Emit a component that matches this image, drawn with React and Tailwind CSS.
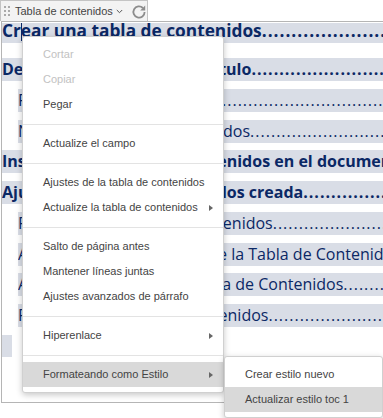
import React from "react";

const docFont = { fontFamily: '"Open Sans", "Noto Sans", sans-serif' };
const uiFont = { fontFamily: '"Liberation Sans", Arial, sans-serif' };

const DOTS = ".".repeat(120);

const TocLine = ({ children, bold, indent, first }) => (
  <div
    className={`flex bg-[#d9dde6] text-[#0b2865] whitespace-nowrap overflow-hidden ${indent ? "ml-[16px]" : ""} ${
      first ? "h-[20px] text-[17.3px] leading-[16px] font-bold" : "mt-[7.75px] h-[23px] text-[16px] leading-[23px]"
    } ${bold && !first ? "font-bold" : ""}`}
  >
    <span>{children}</span>
    <span className="flex-1 overflow-hidden tracking-[1px]">{DOTS}</span>
  </div>
);

const Arrow = () => (
  <svg width="4" height="6" viewBox="0 0 4 6" className="ml-auto">
    <path d="M0 0 L4 3 L0 6 Z" fill="#666" />
  </svg>
);

const Item = ({ children, disabled, active, sub }) => (
  <div
    className={`flex items-center h-[25px] pl-[20px] pr-[10px] ${disabled ? "text-[#c2c2c2]" : "text-[#444]"} ${
      active ? "bg-[#d9d9d9]" : ""
    }`}
  >
    <span>{children}</span>
    {sub && <Arrow />}
  </div>
);

const Divider = () => <div className="mt-[7px] mb-[6px] h-px bg-[#e3e3e3]" />;

const Refresh = () => (
  <svg width="16" height="16" viewBox="0 0 16 16">
    <path d="M13.6 8 A5.6 5.6 0 1 1 11.9 4" fill="none" stroke="#8c8c8c" strokeWidth="1.8" />
    <path d="M14.2 1.6 L14.2 6.6 L9.2 6.6 Z" fill="#8c8c8c" />
  </svg>
);

export default function App() {
  return (
    <div className="relative w-[383px] h-[418px] overflow-hidden bg-white" style={docFont}>
      {/* content control header */}
      <div
        className="flex items-center w-[148px] h-[21px] border border-b-0 border-[#c4c4c4] bg-[#f3f3f3] text-[11px] text-[#444]"
        style={uiFont}
      >
        <div className="grid grid-cols-2 gap-[2px] ml-[3px] mr-[5px]">
          {[0, 1, 2, 3, 4, 5].map(i => (
            <span key={i} className="w-[2px] h-[2px] bg-[#aaa]" />
          ))}
        </div>
        <span>Tabla de contenidos</span>
        <svg width="7" height="5" viewBox="0 0 7 5" className="ml-[3px] mt-[1px]">
          <path d="M0.8 1 L3.5 3.7 L6.2 1" fill="none" stroke="#555" strokeWidth="1" />
        </svg>
        <span className="ml-[8px] mt-[1px]">
          <Refresh />
        </span>
      </div>

      {/* document frame */}
      <div className="relative ml-px h-[382px] border-t border-l border-b border-[#b5b5b5] pt-px" style={docFont}>
        <TocLine first>Crear una tabla de contenidos</TocLine>
        <div className="h-[7.25px]" />
        <TocLine bold>Defina los estilos de cada título</TocLine>
        <TocLine indent>Primer nivel</TocLine>
        <TocLine indent>Niveles de los títulos enlazados</TocLine>
        <TocLine bold>Insertando la tabla de contenidos en el documento</TocLine>
        <TocLine bold>Ajustar su tabla de contenidos creada</TocLine>
        <TocLine indent>Formato de la tabla de contenidos</TocLine>
        <TocLine indent>Agregar entradas nuevas de la Tabla de Contenidos</TocLine>
        <TocLine indent>Actualizar el total de la Tabla de Contenidos</TocLine>
        <TocLine indent>Fuentes de la tabla de contenidos</TocLine>
        <div className="mt-[7.75px] h-[22px] w-[10px] bg-[#d9dde6]" />
        <span className="absolute left-[19px] top-px w-px h-[18px] bg-[#0b2865]" />
      </div>

      {/* context menu */}
      <div
        className="absolute left-[22px] top-[36px] w-[202px] py-[5px] bg-white border border-[#d0d0d0] rounded-[3px] shadow-[0_2px_6px_rgba(0,0,0,0.22)] text-[11px]"
        style={uiFont}
      >
        <Item disabled>Cortar</Item>
        <Item disabled>Copiar</Item>
        <Item>Pegar</Item>
        <Divider />
        <Item>Actualize el campo</Item>
        <Divider />
        <Item>Ajustes de la tabla de contenidos</Item>
        <Item sub>Actualize la tabla de contenidos</Item>
        <Divider />
        <Item>Salto de página antes</Item>
        <Item>Mantener líneas juntas</Item>
        <Item>Ajustes avanzados de párrafo</Item>
        <Divider />
        <Item sub>Hiperenlace</Item>
        <Divider />
        <Item sub active>Formateando como Estilo</Item>
      </div>

      {/* submenu */}
      <div
        className="absolute left-[224px] top-[356px] w-[159px] py-[5px] bg-white border border-[#d0d0d0] rounded-[3px] shadow-[0_2px_6px_rgba(0,0,0,0.22)] text-[11px]"
        style={uiFont}
      >
        <Item>Crear estilo nuevo</Item>
        <Item active>Actualizar estilo toc 1</Item>
      </div>
    </div>
  );
}
